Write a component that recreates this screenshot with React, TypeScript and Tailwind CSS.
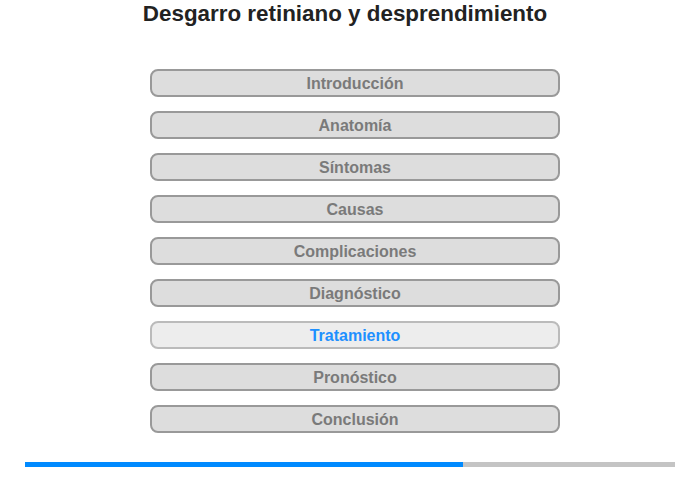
import React from "react";

const items = [
  "Introducción",
  "Anatomía",
  "Síntomas",
  "Causas",
  "Complicaciones",
  "Diagnóstico",
  "Tratamiento",
  "Pronóstico",
  "Conclusión",
];

const active = 6;

export default function App() {
  return (
    <div className="w-[700px] h-[480px] bg-white font-['Liberation_Sans',Arial,sans-serif]">
      <h1 className="pt-[1px] pr-[10px] text-center text-[22.4px] leading-[26px] font-bold text-[#222]">
        Desgarro retiniano y desprendimiento
      </h1>
      <div className="mt-[42px] ml-[150px] w-[410px] flex flex-col gap-[14px]">
        {items.map((label, i) => (
          <div
            key={label}
            className={
              i === active
                ? "h-[28px] pt-[1px] rounded-[8px] border-2 border-[#bbbbbb] bg-[#ededed] flex items-center justify-center text-[16px] font-bold text-[#1e90ff]"
                : "h-[28px] pt-[1px] rounded-[8px] border-2 border-[#999999] bg-[#dddddd] flex items-center justify-center text-[16px] font-bold text-[#7a7a7a]"
            }
          >
            {label}
          </div>
        ))}
      </div>
      <div className="mt-[29px] mx-[25px] h-[5px] flex bg-[#c4c4c4]">
        <div className="w-[438px] h-full bg-[#008aff]" />
      </div>
    </div>
  );
}
